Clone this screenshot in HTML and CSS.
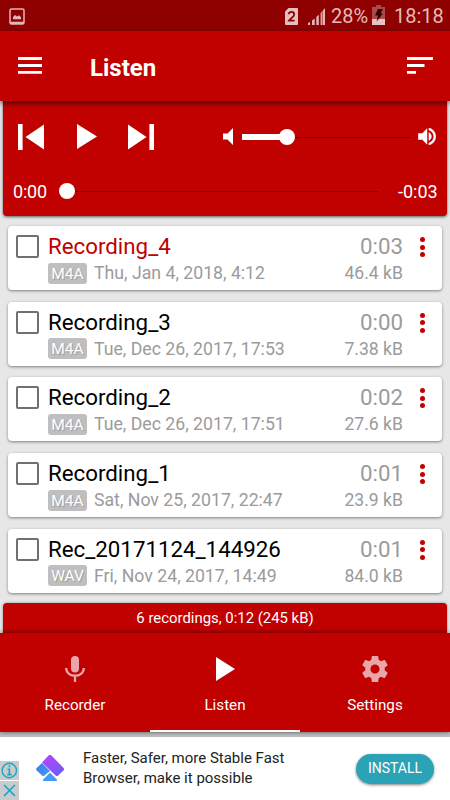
FILE: index.html
```html
<!DOCTYPE html>
<html lang="en">
<head>
<meta charset="utf-8">
<title>Listen</title>
<link rel="stylesheet" href="styles.css">
</head>
<body>
<div class="screen">
  <header class="status">
    <svg class="status-shot" width="16" height="17" viewBox="0 0 16 17"><rect x="1" y="1" width="14" height="15" rx="1.5" fill="none" stroke="#e2b6b6" stroke-width="1.5"/><path d="M1 13.800h14V16H1zM4 11.300V9l2-2 2 1.500 2-1.200 2 2v2z" fill="#e2b6b6"/></svg>
    <svg width="13" height="17" viewBox="0 0 13 17"><path d="M3.500 0H12a1 1 0 0 1 1 1v15a1 1 0 0 1-1 1H1a1 1 0 0 1-1-1V3.500z" fill="#e8bfbf"/><path d="M3.700 6.200C3.700 3.200 9.200 3.200 9.200 6.400 9.200 8.500 6 10 4.100 12.600h5.500" fill="none" stroke="#8f0000" stroke-width="1.8"/></svg>
    <svg class="status-signal" width="17" height="17" viewBox="0 0 17 17" fill="#e2b6b6"><path d="M0 17v-2l2-1v3zM4 12.500l2.700-2V17H4zM8.300 9l2.500-2.300V17H8.300zM12.600 5 17 0v17h-4.400z"/><path d="M14.300 0v17" stroke="#8f0000" stroke-width=".6"/></svg>
    <span class="status-percent">28%</span>
    <svg class="status-battery" width="13" height="20" viewBox="0 0 13 20"><path d="M4 0h5v2h4v18H0V2h4z" fill="#ae4949"/><path d="M0 14h13v6H0z" fill="#e9c3c3"/><path d="M6 4h5L8.500 8.500H11L4.500 16.500l1.500-6H3z" fill="#300"/></svg>
    <span class="status-clock">18:18</span>
  </header>
  <div class="appbar">
    <svg width="24" height="17" viewBox="0 0 24 17"><path d="M0 1.500h24M0 8.500h24M0 15.300h24" stroke="#fff" stroke-width="2.800"/></svg>
    <h1>Listen</h1>
    <svg width="26" height="17" viewBox="0 0 26 17"><path d="M0 1.500h26M0 8.500h17.500M0 15.300h9" stroke="#fff" stroke-width="2.800"/></svg>
  </div>
  <main>
    <section class="player">
      <div class="controls">
        <svg width="26" height="26" viewBox="0 0 26 26" fill="#fff"><path d="M0 0h4.600v26H0zM26 .5v25L7.500 13z"/></svg>
        <svg class="play" width="20" height="25" viewBox="0 0 20 25" fill="#fff"><path d="M0 0v25l20-12.500z"/></svg>
        <svg class="next" width="26" height="26" viewBox="0 0 26 26" fill="#fff"><path d="M21.400 0H26v26h-4.600zM0 .5v25L18.500 13z"/></svg>
        <svg class="vol-low" width="10" height="17" viewBox="0 0 10 17" fill="#fff"><path d="M0 5.500h4.500L10 0v17l-5.500-5.500H0z"/></svg>
        <div class="slider volume"><i class="fill"></i><b class="thumb"></b></div>
        <svg class="vol-high" width="18" height="17" viewBox="3 3.200 18 17.600" fill="#fff" stroke="#fff" stroke-width=".5"><path d="M3 9v6h4l5 5V4L7 9H3zm13.500 3c0-1.770-1.020-3.290-2.500-4.030v8.050c1.480-.73 2.500-2.250 2.500-4.020zM14 3.230v2.060c2.890.86 5 3.540 5 6.710s-2.110 5.850-5 6.710v2.060c4.010-.91 7-4.490 7-8.770s-2.990-7.860-7-8.770z"/></svg>
      </div>
      <div class="progress">
        <span class="elapsed">0:00</span>
        <div class="slider seek"><b class="thumb"></b></div>
        <span class="remaining">-0:03</span>
      </div>
    </section>
    <section class="list">
      <article class="card">
        <i class="check"></i>
        <div class="info"><div class="name active">Recording_4</div><div class="meta"><span class="tag">M4A</span><span class="date">Thu, Jan 4, 2018, 4:12</span></div></div>
        <div class="stats"><div class="length">0:03</div><div class="size">46.4 kB</div></div>
        <div class="more"><i></i><i></i><i></i></div>
      </article>
      <article class="card">
        <i class="check"></i>
        <div class="info"><div class="name">Recording_3</div><div class="meta"><span class="tag">M4A</span><span class="date">Tue, Dec 26, 2017, 17:53</span></div></div>
        <div class="stats"><div class="length">0:00</div><div class="size">7.38 kB</div></div>
        <div class="more"><i></i><i></i><i></i></div>
      </article>
      <article class="card">
        <i class="check"></i>
        <div class="info"><div class="name">Recording_2</div><div class="meta"><span class="tag">M4A</span><span class="date">Tue, Dec 26, 2017, 17:51</span></div></div>
        <div class="stats"><div class="length">0:02</div><div class="size">27.6 kB</div></div>
        <div class="more"><i></i><i></i><i></i></div>
      </article>
      <article class="card">
        <i class="check"></i>
        <div class="info"><div class="name">Recording_1</div><div class="meta"><span class="tag">M4A</span><span class="date">Sat, Nov 25, 2017, 22:47</span></div></div>
        <div class="stats"><div class="length">0:01</div><div class="size">23.9 kB</div></div>
        <div class="more"><i></i><i></i><i></i></div>
      </article>
      <article class="card">
        <i class="check"></i>
        <div class="info"><div class="name">Rec_20171124_144926</div><div class="meta"><span class="tag">WAV</span><span class="date">Fri, Nov 24, 2017, 14:49</span></div></div>
        <div class="stats"><div class="length">0:01</div><div class="size">84.0 kB</div></div>
        <div class="more"><i></i><i></i><i></i></div>
      </article>
    </section>
    <div class="summary">6 recordings, 0:12 (245 kB)</div>
  </main>
  <nav class="tabs">
    <div class="tab">
      <svg width="20" height="26" viewBox="0 0 20 26"><rect x="6" y="0" width="8" height="16.500" rx="4" fill="#eaa5a8"/><path d="M1.200 12c0 10.300 17.600 10.300 17.600 0M10 20v6" fill="none" stroke="#eaa5a8" stroke-width="2.300"/></svg>
      <span>Recorder</span>
    </div>
    <div class="tab selected">
      <svg width="19" height="24" viewBox="0 0 19 24" fill="#fff"><path d="M0 0v24l19-12z"/></svg>
      <span>Listen</span>
    </div>
    <div class="tab">
      <svg width="26" height="26" viewBox="2 2 20 20" fill="#eaa5a8"><path d="M19.430 12.980c.04-.32.07-.64.07-.98s-.03-.66-.07-.98l2.110-1.650c.19-.15.24-.42.12-.64l-2-3.460c-.12-.22-.39-.3-.61-.22l-2.490 1c-.52-.4-1.080-.73-1.690-.98l-.38-2.650C14.460 2.180 14.250 2 14 2h-4c-.25 0-.46.18-.49.42l-.38 2.650c-.61.25-1.170.59-1.690.98l-2.490-1c-.23-.09-.49 0-.61.22l-2 3.460c-.13.22-.07.49.12.64l2.110 1.650c-.04.32-.07.65-.07.98s.03.66.07.98l-2.110 1.650c-.19.15-.24.42-.12.64l2 3.460c.12.22.39.3.61.22l2.490-1c.52.4 1.080.73 1.690.98l.38 2.650c.03.24.24.42.49.42h4c.25 0 .46-.18.49-.42l.38-2.650c.61-.25 1.170-.59 1.690-.98l2.490 1c.23.09.49 0 .61-.22l2-3.460c.12-.22.07-.49-.12-.64l-2.110-1.650zM12 15.500c-1.930 0-3.500-1.570-3.500-3.500s1.570-3.500 3.500-3.500 3.500 1.570 3.500 3.500-1.570 3.500-3.500 3.500z"/></svg>
      <span>Settings</span>
    </div>
  </nav>
  <aside class="ad">
    <div class="ad-choices">
      <svg width="19" height="19" viewBox="0 0 19 19" fill="none" stroke="#12a9cb"><circle cx="9.300" cy="9.500" r="7.200" stroke-width="1.400"/><path d="M9.400 4.300v2M7.500 8.200h1.900v5.500M7.200 13.600h4.500" stroke-width="1.600"/></svg>
      <svg width="19" height="19" viewBox="0 0 19 19" fill="none" stroke="#12a9cb"><path d="m4 4 11 11M15 4 4 15" stroke-width="1.700"/></svg>
    </div>
    <svg class="ad-logo" width="28" height="27" viewBox="0 0 28 27">
      <defs><linearGradient id="violet" x1=".3" y1="0" x2=".8" y2="1"><stop offset="0" stop-color="#b544fb"/><stop offset="1" stop-color="#6c5cf5"/></linearGradient><linearGradient id="blue" x1="0" y1="0" x2="1" y2="1"><stop offset="0" stop-color="#3b7be4"/><stop offset="1" stop-color="#449df8"/></linearGradient></defs>
      <path d="M6 8 14 16 8.500 20.500a2 2 0 0 1-2.500 0L.7 15.600a2 2 0 0 1 0-2.700z" fill="url(#blue)"/>
      <path d="M12.500.6a2 2 0 0 1 3 0l11.900 12.200a2 2 0 0 1 0 2.800l-5.200 4.800a2 2 0 0 1-2.600 0L6 7.600z" fill="url(#violet)"/>
      <path d="M14 17.500 20.800 24.500q1 1.500-.8 1.500H8q-1.800 0-.8-1.500z" fill="#449bf5"/>
    </svg>
    <p>Faster, Safer, more Stable Fast<br>Browser, make it possible</p>
    <div class="install">INSTALL</div>
  </aside>
</div>
</body>
</html>
```

FILE: styles.css
```css
* { box-sizing: border-box; }
body { margin: 0; font-family: Roboto, sans-serif; }
svg { display: block; flex: none; }
.screen { width: 450px; height: 800px; overflow: hidden; display: flex; flex-direction: column; background: #e7e7e7; }

.status { height: 31px; flex: none; display: flex; align-items: center; padding: 1px 7px 0 9px; background: #8f0000; color: #e4baba; font-size: 20px; }
.status-shot { margin-right: auto; }
.status-signal { margin-left: 10px; }
.status-percent { width: 37px; margin-left: 6px; }
.status-battery { margin: -2px 0 0 4px; }
.status-clock { width: 49px; margin-left: 9px; }

.appbar { position: relative; z-index: 2; height: 70px; flex: none; display: flex; align-items: center; padding: 0 17px 0 18px; background: #c10000; box-shadow: 0 2px 5px rgba(0,0,0,.65); }
.appbar svg { margin-top: -1px; }
.appbar h1 { flex: 1; margin: 3px 0 0 48px; color: #fff; font-size: 24px; line-height: 28px; font-weight: 700; }

main { height: 532px; flex: none; display: flex; flex-direction: column; padding: 0 3px; }
.player { height: 115px; flex: none; background: #c10000; color: #fff; border-radius: 0 0 4px 4px; box-shadow: 0 1px 3px rgba(0,0,0,.6); }
.controls { height: 71px; display: flex; align-items: center; padding: 0 11px 0 15px; }
.play { margin-left: 33px; }
.next { margin-left: 31px; }
.vol-low { margin-left: 69px; }
.vol-high { margin-left: 8px; }
.slider { position: relative; height: 16px; background: linear-gradient(#6b0000, #6b0000) 0 8px / 100% 1px no-repeat; }
.slider .thumb { position: absolute; top: 0; left: 0; width: 16px; height: 16px; border-radius: 50%; background: #fff; }
.volume { width: 168px; margin-left: 9px; }
.volume .fill { position: absolute; left: 0; top: 5px; width: 40px; height: 6px; background: #fff; }
.volume .thumb { left: 37px; }
.progress { display: flex; align-items: center; height: 38px; padding: 0 10px; font-size: 18px; }
.elapsed { width: 34px; letter-spacing: -.2px; }
.seek { flex: 1; margin: 0 20px 0 12px; }
.remaining { width: 39px; }

.list { display: flex; flex-direction: column; gap: 11.700px; padding: 10px 5px 0; }
.card { display: flex; height: 64px; padding: 6px 17px 0 8px; background: #fff; border-radius: 4px; box-shadow: 0 1px 3px rgba(0,0,0,.45); }
.check { width: 23px; height: 23px; margin-top: 3px; border: 2px solid #707070; border-radius: 2px; }
.info { flex: 1; margin-left: 9px; white-space: nowrap; }
.name, .length { font-size: 22.300px; line-height: 28px; }
.name { color: #000; }
.name.active { color: #c10000; }
.meta { display: flex; align-items: center; height: 22px; margin-top: 2px; font-size: 17.700px; color: #9b9b9b; }
.tag { width: 39px; height: 21px; border-radius: 3px; background: #bfbfbf; color: #fff; font-size: 15.500px; line-height: 22px; text-align: center; text-shadow: 1px 1px 1px rgba(0,0,0,.2); }
.date { margin-left: 7px; }
.stats { text-align: right; color: #9b9b9b; }
.size { margin-top: 2px; font-size: 17.600px; line-height: 22px; }
.more { display: flex; flex-direction: column; gap: 2.500px; margin: 5px 0 0 17px; }
.more i { width: 5px; height: 5px; border-radius: 50%; background: #c10000; }

.summary { margin-top: auto; height: 30px; background: #c10000; color: #fff; border-radius: 4px 4px 0 0; box-shadow: 0 0 3px rgba(0,0,0,.4); font-size: 14.900px; line-height: 31px; text-align: center; }

.tabs { position: relative; z-index: 2; height: 99px; flex: none; display: flex; background: #c10000; color: #fff; box-shadow: 0 0 5px rgba(0,0,0,.6); }
.tab { flex: 1; display: flex; flex-direction: column; align-items: center; padding-top: 23px; font-size: 15.200px; line-height: 20px; }
.tab svg { height: 26px; }
.tab span { margin-top: 13px; }
.tab.selected { border-bottom: 2px solid #fff; }

.ad { flex: 1; display: flex; background: #fff; border-top: 5px solid #c2c2c2; }
.ad-choices { align-self: flex-end; display: grid; gap: 1px; }
.ad-choices svg { background: #cbcbcb; }
.ad-logo { margin: 18px 0 0 17px; }
.ad p { margin: 11px 0 0 19px; flex: 1; color: #222; font-size: 15px; line-height: 20px; }
.install { width: 78px; height: 30px; margin: 17px 16px 0 0; border-radius: 15px; background: #2ba3b6; color: #fff; font-size: 14px; line-height: 29px; text-align: center; box-shadow: 0 1px 3px rgba(0,0,0,.5); }
```
